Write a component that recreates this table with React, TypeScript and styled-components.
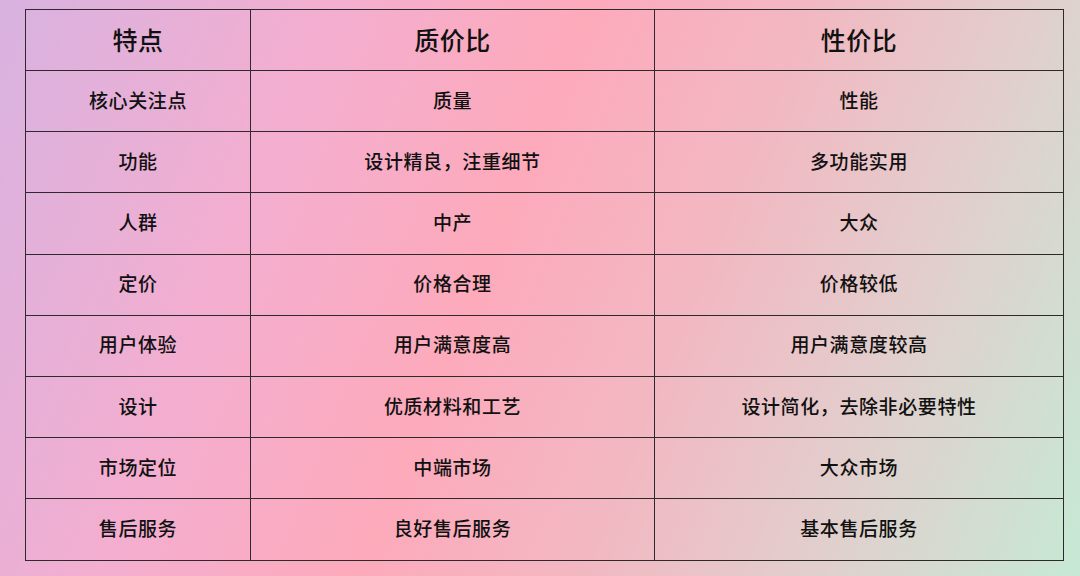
import React from "react";
import styled, { createGlobalStyle } from "styled-components";

const Global = createGlobalStyle`
  html, body { margin: 0; padding: 0; }
  body { font-family: "Noto Sans CJK SC", "Noto Sans", sans-serif; }
`;

const Page = styled.div`
  width: 1080px;
  height: 576px;
  box-sizing: border-box;
  padding: 9px 17px 0 25px;
  background: linear-gradient(112deg, #d8b2e0 0%, #f3aed0 25%, #fdaabb 45%, #f2b8c2 62%, #e3cdcc 78%, #c6e9d4 100%);
  overflow: hidden;
`;

const Table = styled.table`
  width: 1038px;
  border-collapse: collapse;
  table-layout: fixed;
  border: 1px solid #2e2a2c;
  color: #111;
`;

const Col = styled.col<{ $w: number }>`
  width: ${(p) => p.$w}px;
`;

const HeadCell = styled.th`
  border: 1px solid #2e2a2c;
  height: 59px;
  padding: 0 0 1px;
  text-align: center;
  vertical-align: middle;
  font-size: 25px;
  font-weight: 500;
  line-height: 1;
  letter-spacing: 0.5px;
`;

const Cell = styled.td`
  border: 1px solid #2e2a2c;
  height: 56.2px;
  padding: 0 0 4px;
  box-sizing: content-box;
  text-align: center;
  vertical-align: middle;
  font-size: 19px;
  font-weight: 500;
  line-height: 1;
  letter-spacing: 0.6px;
`;

const header = ["特点", "质价比", "性价比"];
const widths = [225, 404, 409];
const rows: string[][] = [
  ["核心关注点", "质量", "性能"],
  ["功能", "设计精良，注重细节", "多功能实用"],
  ["人群", "中产", "大众"],
  ["定价", "价格合理", "价格较低"],
  ["用户体验", "用户满意度高", "用户满意度较高"],
  ["设计", "优质材料和工艺", "设计简化，去除非必要特性"],
  ["市场定位", "中端市场", "大众市场"],
  ["售后服务", "良好售后服务", "基本售后服务"],
];

export default function App() {
  return (
    <Page>
      <Global />
      <Table>
        <colgroup>
          {widths.map((w, i) => (
            <Col key={i} $w={w} />
          ))}
        </colgroup>
        <thead>
          <tr>
            {header.map((h) => (
              <HeadCell key={h}>{h}</HeadCell>
            ))}
          </tr>
        </thead>
        <tbody>
          {rows.map((r) => (
            <tr key={r[0]}>
              {r.map((c, i) => (
                <Cell key={i}>{c}</Cell>
              ))}
            </tr>
          ))}
        </tbody>
      </Table>
    </Page>
  );
}
